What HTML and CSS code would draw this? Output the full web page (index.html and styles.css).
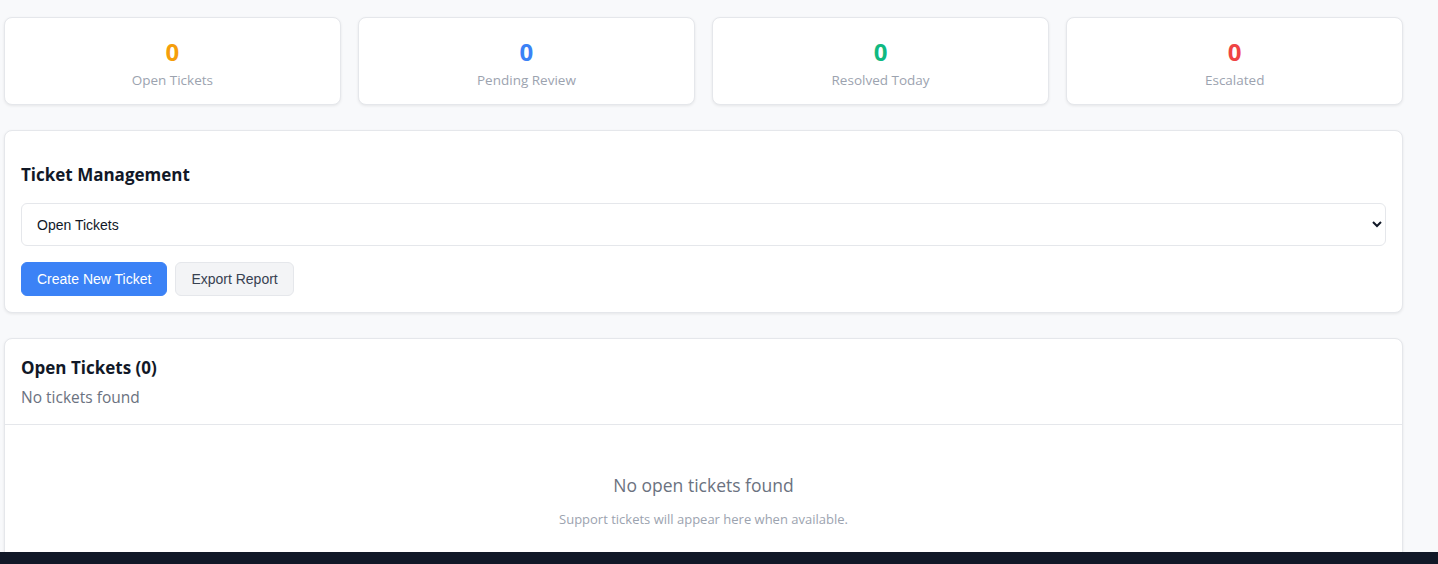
FILE: index.html
```html
<!DOCTYPE html>
<html lang="en">
<head>
<meta charset="utf-8">
<title>Tickets</title>
<link rel="stylesheet" href="styles.css">
</head>
<body>
<main class="page">
  <section class="stats">
    <div class="stat">
      <div class="stat-value orange">0</div>
      <div class="stat-label">Open Tickets</div>
    </div>
    <div class="stat">
      <div class="stat-value blue">0</div>
      <div class="stat-label">Pending Review</div>
    </div>
    <div class="stat">
      <div class="stat-value green">0</div>
      <div class="stat-label">Resolved Today</div>
    </div>
    <div class="stat">
      <div class="stat-value red">0</div>
      <div class="stat-label">Escalated</div>
    </div>
  </section>

  <section class="panel manage">
    <h3 class="panel-title">Ticket Management</h3>
    <select class="filter">
      <option>Open Tickets</option>
      <option>Pending Review</option>
      <option>Resolved</option>
      <option>Escalated</option>
    </select>
    <div class="actions">
      <button class="btn btn-primary">Create New Ticket</button>
      <button class="btn btn-secondary">Export Report</button>
    </div>
  </section>

  <section class="panel list">
    <div class="list-header">
      <h3 class="list-title">Open Tickets (0)</h3>
      <div class="list-sub">No tickets found</div>
    </div>
    <div class="empty">
      <div class="empty-title">No open tickets found</div>
      <div class="empty-sub">Support tickets will appear here when available.</div>
    </div>
  </section>
</main>
<footer class="bottom-bar"></footer>
</body>
</html>
```
FILE: styles.css
```css
* { box-sizing: border-box; }
html, body { margin: 0; padding: 0; }
body {
  background: #f8f9fb;
  font-family: "Open Sans", "Noto Sans", "Liberation Sans", sans-serif;
  color: #111827;
}
.page {
  width: 1399px;
  margin-left: 4px;
  padding-top: 17px;
  display: flex;
  flex-direction: column;
  gap: 25px;
}
.stats {
  display: grid;
  grid-template-columns: repeat(4, 1fr);
  gap: 17.5px;
}
.stat {
  background: #fff;
  border: 1px solid #e5e7eb;
  border-radius: 8px;
  box-shadow: 0 1px 3px rgba(0,0,0,0.08);
  height: 88px;
  padding-top: 19px;
  text-align: center;
}
.stat-value {
  font-size: 24px;
  font-weight: 700;
  line-height: 30px;
}
.stat-label {
  margin-top: 3px;
  font-size: 13.5px;
  line-height: 20px;
  color: #9ca3af;
}
.orange { color: #f59e0b; }
.blue { color: #3b82f6; }
.green { color: #10b981; }
.red { color: #ef4444; }

.panel {
  background: #fff;
  border: 1px solid #e5e7eb;
  border-radius: 8px;
  box-shadow: 0 1px 3px rgba(0,0,0,0.08);
}
.manage {
  padding: 16px;
}
.panel-title {
  margin: 16px 0 16px;
  font-size: 17px;
  line-height: 24px;
  font-weight: 700;
  color: #111827;
}
.filter {
  display: block;
  width: 100%;
  height: 43px;
  padding: 0 11px;
  border: 1px solid #e5e7eb;
  border-radius: 6px;
  background: #fff;
  font-family: "Liberation Sans", Arial, sans-serif;
  font-size: 14px;
  color: #111827;
}
.actions {
  display: flex;
  gap: 8px;
  margin-top: 16px;
}
.btn {
  height: 34px;
  padding: 0 15px;
  border-radius: 6px;
  font-family: "Liberation Sans", Arial, sans-serif;
  font-size: 14px;
  cursor: pointer;
}
.btn-primary {
  background: #3b82f6;
  border: 1px solid #3b82f6;
  color: #fff;
}
.btn-secondary {
  background: #f3f4f6;
  border: 1px solid #e5e7eb;
  color: #374151;
}
.list-header {
  padding: 18px 16px 15px;
  border-bottom: 1px solid #e5e7eb;
}
.list-title {
  margin: 0;
  font-size: 17px;
  line-height: 22px;
  font-weight: 700;
  color: #111827;
}
.list-sub {
  margin-top: 6px;
  font-size: 15.5px;
  line-height: 24px;
  color: #6b7280;
}
.empty {
  padding: 47px 16px 48px;
  text-align: center;
}
.empty-title {
  font-size: 17.5px;
  line-height: 27px;
  color: #6b7280;
}
.empty-sub {
  margin-top: 10px;
  font-size: 13px;
  line-height: 21px;
  color: #9ca3af;
}
.bottom-bar {
  position: fixed;
  left: 0;
  right: 0;
  bottom: 0;
  height: 12px;
  background: #111827;
}
```
